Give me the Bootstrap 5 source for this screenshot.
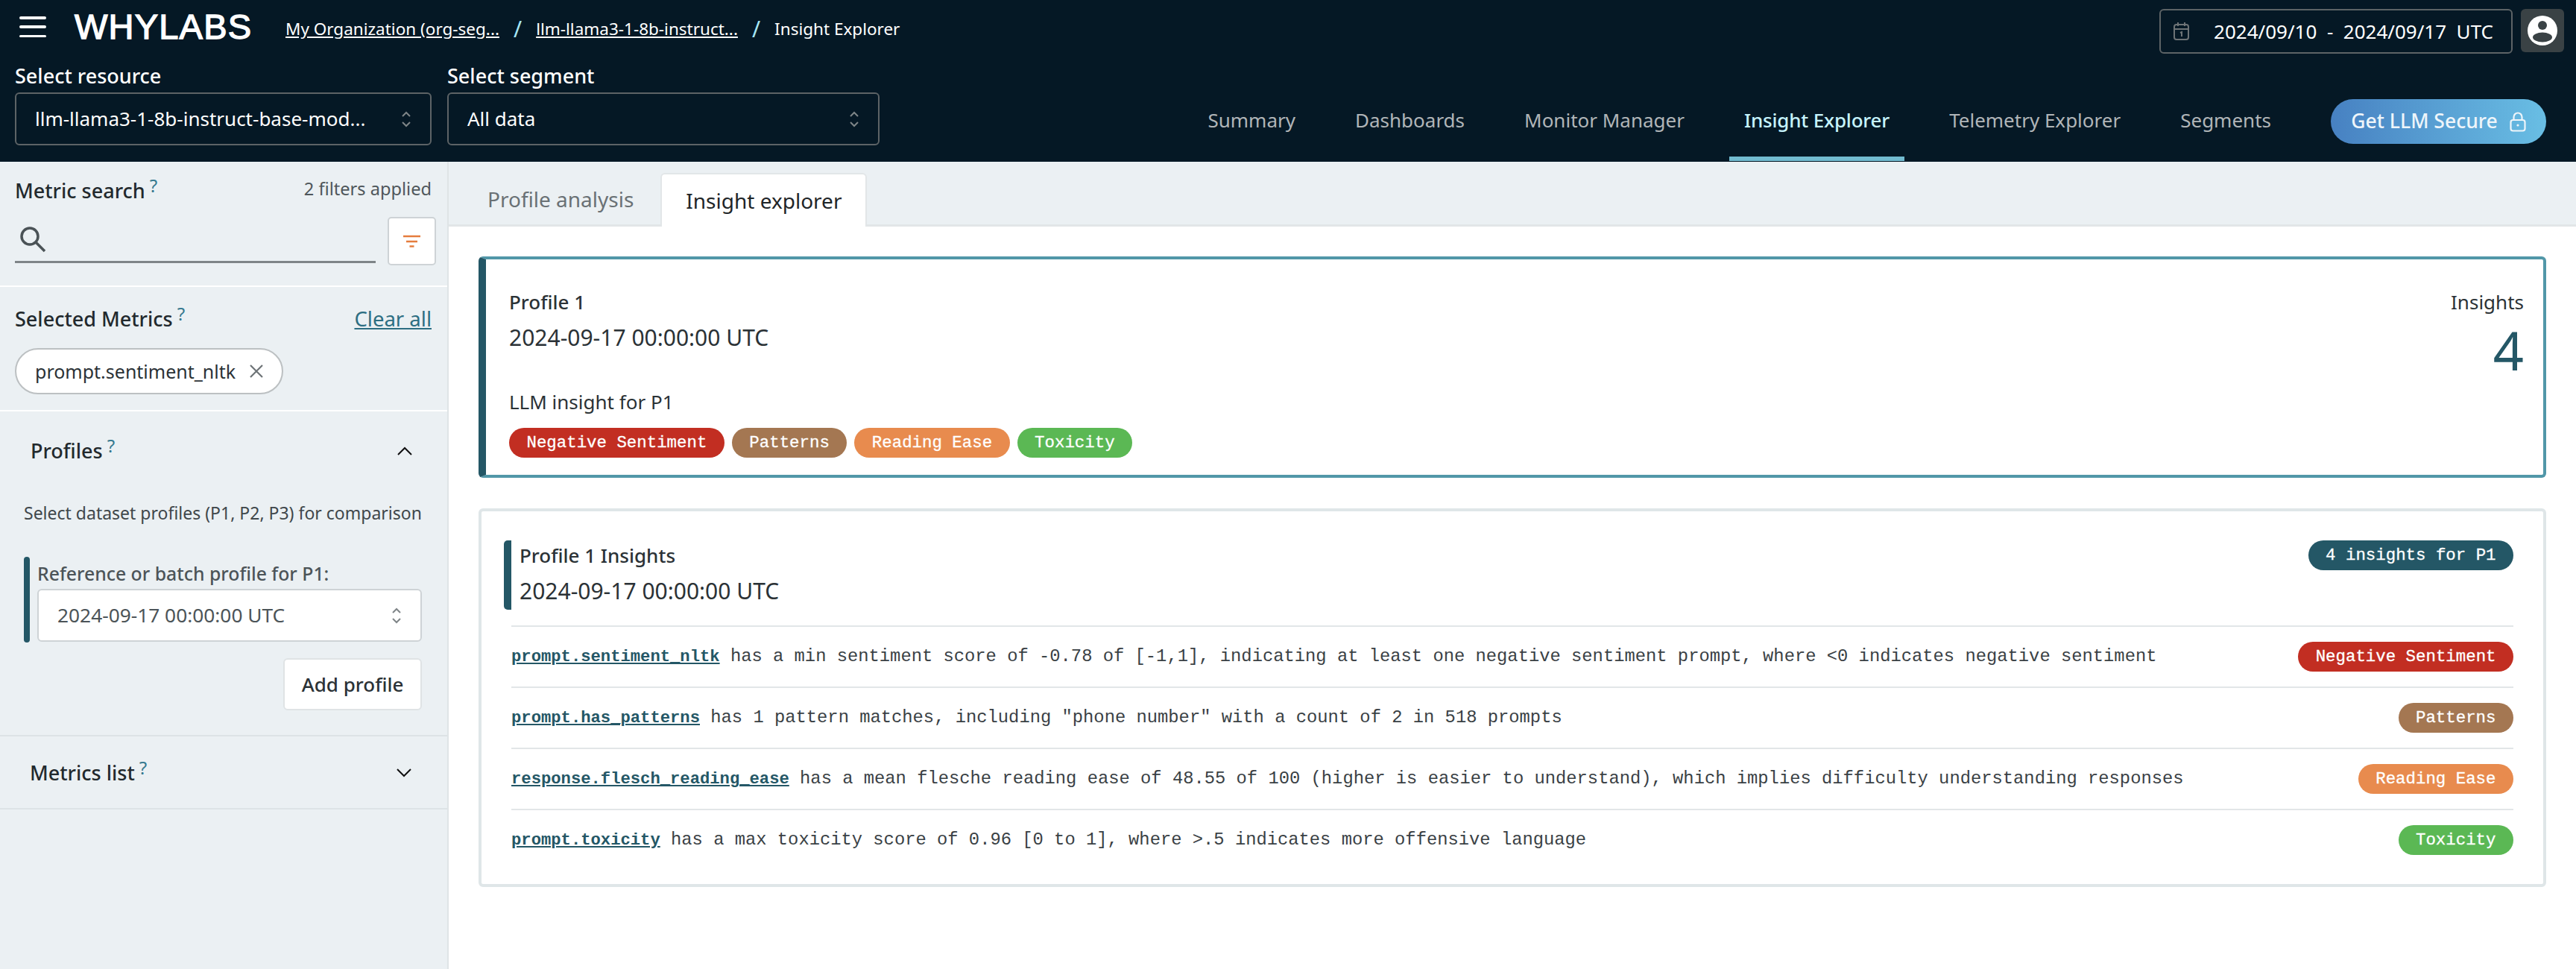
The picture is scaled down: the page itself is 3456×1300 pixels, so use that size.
<!DOCTYPE html>
<html lang="en">
<head>
    <meta charset="UTF-8">
    <title>Insight Explorer</title>
    <link href="https://cdn.jsdelivr.net/npm/bootstrap@5.3.0/dist/css/bootstrap.min.css" rel="stylesheet">
    <style>
        body {
            font-family: "Noto Sans", "Open Sans", sans-serif;
            font-size: 24px;
            color: #2b3236;
            background: #fff;
            height: 1300px;
            overflow: hidden;
        }
        .top-head { background: #051825; height: 217px; color: #fff; display: flex; flex-direction: column; }
        .head-row-a { height: 83px; padding: 12px 16px 0 26px; }
        .head-row-b { flex: 1; padding: 0 40px 0 20px; }
        .burger { width: 36px; height: 28px; display: flex; flex-direction: column; justify-content: space-between; margin-top: 10px; flex: none; }
        .burger span { display: block; height: 3.5px; border-radius: 2px; background: #fff; }
        .wl-logo { font-family: "Liberation Sans", sans-serif; font-size: 47px; letter-spacing: 1.2px; margin-left: 38px; width: 283px; flex: none; line-height: 47px; -webkit-text-stroke: 1.4px #fff; }
        .crumb { font-size: 22.5px; color: #fff; margin-top: 10px; }
        .crumb a { color: #fff; }
        .crumb-sep { color: #a5e6f5; margin: 0 19px; font-size: 30px; line-height: 1; }
        .date-box { width: 474px; height: 60px; border: 2px solid #5d6366; border-radius: 6px; padding: 0 24px 0 17px; font-size: 26px; white-space: pre; }
        .avatar { width: 58px; height: 58px; background: #3a4245; border-radius: 6px; margin-left: 11px; }
        .pick-col { width: 559px; margin-right: 21px; }
        .pick-col.wider { width: 580px; }
        .pick-label { font-size: 27px; font-weight: 500; line-height: 34px; padding-top: 2px; margin-bottom: 5px; }
        .pick-box { height: 71px; border: 2px solid #5d6366; border-radius: 6px; padding: 0 25px; font-size: 26px; }
        .top-tabs { height: 100%; }
        .top-tabs a { display: flex; align-items: center; height: 103px; margin-top: 30px; padding: 0 20px; margin-right: 40px; color: #b0b5b8; font-size: 26px; text-decoration: none; border-bottom: 6px solid transparent; }
        .top-tabs a.here { color: #c6f3fc; font-weight: 500; letter-spacing: -.2px; border-bottom-color: #72bbd0; }
        .top-tabs a.last-tab { margin-right: 0; }
        .secure-btn { width: 289px; height: 60px; margin-left: 60px; margin-top: 50px; border-radius: 30px; color: #eef5fa; border: 0; font-size: 26.5px; font-weight: 500; background: linear-gradient(90deg, #4781c2, #69bee4); }
        .page-body { display: flex; height: 1083px; }
        .side { width: 602px; flex: none; background: #ebf0f3; border-right: 2px solid #dfe4e6; }
        .side-sec { border-bottom: 2px solid #fff; }
        .side-a { height: 168px; padding: 20px 15px 0 20px; }
        .side-b { height: 167px; padding: 22px 21px 0 20px; }
        .side-c { height: 436px; padding: 34px 34px 0 32px; border-bottom-color: #dde3e6; }
        .side-d { height: 98px; padding: 30px 48px 0 40px; border-bottom-color: #dde3e6; }
        .sec-title { font-size: 27px; font-weight: 500; color: #22292d; line-height: 36px; }
        .hint { color: #36798f; font-size: 24px; vertical-align: 8px; margin-left: 6px; font-weight: 400; line-height: 1; }
        .filter-note { color: #4f575b; font-size: 23.6px; margin: -3px 6px 0 0; }
        .search-row { margin-top: 17px; }
        .search-line { width: 484px; height: 62px; border-bottom: 3px solid #7f8588; padding-left: 6px; }
        .filter-btn { width: 65px; height: 65px; border: 2px solid #ced3d6; border-radius: 5px; background: #fff; }
        .clear-link { color: #2d6e82; font-size: 27.500px; }
        .chip { width: 360px; height: 62px; margin-top: 19px; border: 2px solid #bcc0c2; border-radius: 31px; background: #fff; padding: 0 25px 0 25px; font-size: 25px; }
        .profiles-head { padding: 0 13px 0 9px; }
        .desc-line { font-size: 23px; color: #40474b; margin: 50px 0 0 0; line-height: 30px; white-space: nowrap; }
        .ref-block { margin-top: 44px; }
        .ref-bar { width: 10px; height: 115px; background: #245766; border-radius: 4px; margin-right: 10px; }
        .ref-label { font-size: 24.8px; font-weight: 500; color: #4c5458; line-height: 30px; margin: 7px 0 6px; white-space: nowrap; }
        .ref-select { width: 516px; height: 71px; background: #fff; border: 2px solid #ced3d6; border-radius: 6px; padding: 0 25px; font-size: 26.3px; color: #4c5458; }
        .add-btn { display: block; width: 186px; height: 70px; margin: 21px 0 0 auto; background: #fff; border: 2px solid #dfe3e5; border-radius: 6px; font-size: 26px; font-weight: 500; color: #2b3236; padding: 0; }
        .main-area { flex: 1; min-width: 0; }
        .sub-tabs { height: 87px; background: #ebf0f3; border-bottom: 3px solid #e2e6e8; padding-left: 18px; }
        .sub-tab { font-size: 28px; height: 70px; padding: 0 34px; margin-top: 15px; color: #6a7175; }
        .sub-tab.here { background: #fff; color: #1f2528; border: 2px solid #e2e6e8; border-bottom: 0; border-radius: 6px 6px 0 0; margin-left: 2px; height: 72px; padding: 0 32px; }
        .main-pad { padding: 40px 40px 0 40px; }
        .sum-card { height: 297px; border: 4px solid #5197a8; border-left: 10px solid #245766; border-radius: 6px; padding: 39px 26px 0 31px; }
        .head-bold { font-size: 26px; font-weight: 500; line-height: 36px; color: #2b3236; }
        .head-date { font-size: 30px; line-height: 40px; color: #2b3236; margin-top: 10px; }
        .llm-note { font-size: 26px; margin-top: 48px; line-height: 36px; }
        .tag-line { gap: 10px; margin-top: 17px; }
        .big-num { font-size: 72px; line-height: 72px; color: #245766; margin-top: 10px; }
        .tag-pill { display: inline-block; font-family: "Liberation Mono", monospace; font-size: 22.4px; line-height: 40px; height: 40px; padding: 0 23.500px; border-radius: 20px; color: #fff; white-space: nowrap; -webkit-text-stroke: .3px #fff; }
        .tag-red { background: #c22e22; }
        .tag-brown { background: #a47752; }
        .tag-orange { background: #e88b4e; }
        .tag-green { background: #5bb854; }
        .tag-teal { background: #245766; }
        .detail-card { height: 508px; margin-top: 41px; border: 4px solid #dfe6e8; border-radius: 6px; padding: 39px 40px 0 30px; }
        .detail-head { height: 93px; border-left: 10px solid #245766; border-radius: 5px; padding-left: 11px; margin-bottom: 21px; }
        .detail-head .head-bold { line-height: 40px; }
        .detail-head .head-date { margin-top: 8px; }
        .insight-rows { margin-left: 10px; }
        .insight-row { height: 82px; border-top: 2px solid #e2e6e8; font-family: "Liberation Mono", monospace; font-size: 23.8px; color: #3a4145; white-space: nowrap; }
        .insight-row a { color: #245766; font-weight: 700; font-size: 22.2px; }
    </style>
</head>
<body>
    <div class="top-head">
        <div class="head-row-a d-flex align-items-start">
            <div class="burger"><span></span><span></span><span></span></div>
            <div class="wl-logo">WHYLABS</div>
            <div class="crumb d-flex align-items-center">
                <a href="#">My Organization (org-seg...</a><span class="crumb-sep">/</span>
                <a href="#">llm-llama3-1-8b-instruct...</a><span class="crumb-sep">/</span>
                <span>Insight Explorer</span>
            </div>
            <div class="d-flex ms-auto">
                <div class="date-box d-flex align-items-center justify-content-between">
                    <svg width="21" height="24" viewBox="0 0 21 24" fill="none" stroke="#6d7376" stroke-width="2"><rect x="1" y="3" width="19" height="20" rx="3"/><path d="M1 9h19M6 0v5M15 0v5M9 14l2-1v6"/></svg>
                    <span>2024/09/10  -  2024/09/17  UTC</span>
                </div>
                <div class="avatar d-flex align-items-center justify-content-center">
                    <svg width="40" height="40" viewBox="0 0 40 40"><circle cx="20" cy="20" r="20" fill="#fff"/><circle cx="20" cy="13" r="6" fill="#3a4245"/><ellipse cx="20" cy="29" rx="13" ry="6.5" fill="#3a4245"/></svg>
                </div>
            </div>
        </div>
        <div class="head-row-b d-flex">
            <div class="pick-col">
                <div class="pick-label">Select resource</div>
                <div class="pick-box d-flex align-items-center justify-content-between">
                    <span>llm-llama3-1-8b-instruct-base-mod...</span>
                    <svg width="14" height="22" viewBox="0 0 14 22" fill="none" stroke="#7f8588" stroke-width="2"><path d="M2 7l5-5 5 5M2 15l5 5 5-5"/></svg>
                </div>
            </div>
            <div class="pick-col wider">
                <div class="pick-label">Select segment</div>
                <div class="pick-box d-flex align-items-center justify-content-between">
                    <span>All data</span>
                    <svg width="14" height="22" viewBox="0 0 14 22" fill="none" stroke="#7f8588" stroke-width="2"><path d="M2 7l5-5 5 5M2 15l5 5 5-5"/></svg>
                </div>
            </div>
            <div class="top-tabs d-flex ms-auto align-items-start">
                <a href="#">Summary</a>
                <a href="#">Dashboards</a>
                <a href="#">Monitor Manager</a>
                <a href="#" class="here">Insight Explorer</a>
                <a href="#">Telemetry Explorer</a>
                <a href="#" class="last-tab">Segments</a>
                <button class="secure-btn d-flex align-items-center justify-content-center gap-3">Get LLM Secure
                    <svg width="22" height="27" viewBox="0 0 22 27" fill="none" stroke="#eef5fa" stroke-width="2.2"><rect x="1.5" y="11" width="19" height="14.5" rx="3"/><path d="M5.5 11V7a5.5 5.5 0 0 1 11 0v4"/><circle cx="11" cy="18" r="1.6" fill="#eef5fa" stroke="none"/></svg>
                </button>
            </div>
        </div>
    </div>

    <div class="page-body">
        <div class="side">
            <div class="side-sec side-a">
                <div class="d-flex justify-content-between align-items-center">
                    <div class="sec-title">Metric search<span class="hint">?</span></div>
                    <div class="filter-note">2 filters applied</div>
                </div>
                <div class="search-row d-flex justify-content-between align-items-start">
                    <div class="search-line d-flex align-items-center">
                        <svg width="36" height="36" viewBox="0 0 36 36" fill="none" stroke="#4a5256" stroke-width="3.5"><circle cx="14" cy="14" r="11"/><path d="M22 22l12 12"/></svg>
                    </div>
                    <div class="filter-btn d-flex align-items-center justify-content-center">
                        <svg width="23" height="17" viewBox="0 0 23 17" fill="none" stroke="#e57d3e" stroke-width="2.5"><path d="M0 2h23M4 9h15M8.500 15.500h6"/></svg>
                    </div>
                </div>
            </div>
            <div class="side-sec side-b">
                <div class="d-flex justify-content-between align-items-center">
                    <div class="sec-title">Selected Metrics<span class="hint">?</span></div>
                    <a href="#" class="clear-link">Clear all</a>
                </div>
                <div class="chip d-flex align-items-center justify-content-between">
                    <span>prompt.sentiment_nltk</span>
                    <svg width="18" height="18" viewBox="0 0 18 18" stroke="#6d7376" stroke-width="2.2"><path d="M1 1l16 16M17 1L1 17"/></svg>
                </div>
            </div>
            <div class="side-sec side-c">
                <div class="profiles-head d-flex justify-content-between align-items-center">
                    <div class="sec-title">Profiles<span class="hint">?</span></div>
                    <svg width="20" height="12" viewBox="0 0 20 12" fill="none" stroke="#111" stroke-width="2"><path d="M1 11l9-9 9 9"/></svg>
                </div>
                <p class="desc-line">Select dataset profiles (P1, P2, P3) for comparison</p>
                <div class="ref-block d-flex">
                    <div class="ref-bar"></div>
                    <div>
                        <div class="ref-label">Reference or batch profile for P1:</div>
                        <div class="ref-select d-flex align-items-center justify-content-between">
                            <span>2024-09-17 00:00:00 UTC</span>
                            <svg width="14" height="22" viewBox="0 0 14 22" fill="none" stroke="#7f8588" stroke-width="2"><path d="M2 7l5-5 5 5M2 15l5 5 5-5"/></svg>
                        </div>
                    </div>
                </div>
                <button class="add-btn">Add profile</button>
            </div>
            <div class="side-sec side-d">
                <div class="d-flex justify-content-between align-items-center">
                    <div class="sec-title">Metrics list<span class="hint">?</span></div>
                    <svg width="20" height="12" viewBox="0 0 20 12" fill="none" stroke="#111" stroke-width="2"><path d="M1 1l9 9 9-9"/></svg>
                </div>
            </div>
        </div>
        <div class="main-area">
            <div class="sub-tabs d-flex">
                <div class="sub-tab d-flex align-items-center">Profile analysis</div>
                <div class="sub-tab here d-flex align-items-center">Insight explorer</div>
            </div>
            <div class="main-pad">
                <div class="sum-card d-flex justify-content-between">
                    <div>
                        <div class="head-bold">Profile 1</div>
                        <div class="head-date">2024-09-17 00:00:00 UTC</div>
                        <div class="llm-note">LLM insight for P1</div>
                        <div class="tag-line d-flex">
                            <span class="tag-pill tag-red">Negative Sentiment</span>
                            <span class="tag-pill tag-brown">Patterns</span>
                            <span class="tag-pill tag-orange">Reading Ease</span>
                            <span class="tag-pill tag-green">Toxicity</span>
                        </div>
                    </div>
                    <div class="text-end">
                        <div class="head-bold fw-normal">Insights</div>
                        <div class="big-num">4</div>
                    </div>
                </div>
                <div class="detail-card">
                    <div class="d-flex justify-content-between align-items-start">
                        <div class="detail-head">
                            <div class="head-bold">Profile 1 Insights</div>
                            <div class="head-date">2024-09-17 00:00:00 UTC</div>
                        </div>
                        <span class="tag-pill tag-teal">4 insights for P1</span>
                    </div>
                    <div class="insight-rows">
                        <div class="insight-row d-flex align-items-center justify-content-between">
                            <span><a href="#">prompt.sentiment_nltk</a> has a min sentiment score of -0.78 of [-1,1], indicating at least one negative sentiment prompt, where &lt;0 indicates negative sentiment</span>
                            <span class="tag-pill tag-red">Negative Sentiment</span>
                        </div>
                        <div class="insight-row d-flex align-items-center justify-content-between">
                            <span><a href="#">prompt.has_patterns</a> has 1 pattern matches, including "phone number" with a count of 2 in 518 prompts</span>
                            <span class="tag-pill tag-brown">Patterns</span>
                        </div>
                        <div class="insight-row d-flex align-items-center justify-content-between">
                            <span><a href="#">response.flesch_reading_ease</a> has a mean flesche reading ease of 48.55 of 100 (higher is easier to understand), which implies difficulty understanding responses</span>
                            <span class="tag-pill tag-orange">Reading Ease</span>
                        </div>
                        <div class="insight-row d-flex align-items-center justify-content-between">
                            <span><a href="#">prompt.toxicity</a> has a max toxicity score of 0.96 [0 to 1], where &gt;.5 indicates more offensive language</span>
                            <span class="tag-pill tag-green">Toxicity</span>
                        </div>
                    </div>
                </div>
            </div>
        </div>
    </div>
    <script src="https://cdn.jsdelivr.net/npm/bootstrap@5.3.0/dist/js/bootstrap.bundle.min.js"></script>
</body>
</html>
